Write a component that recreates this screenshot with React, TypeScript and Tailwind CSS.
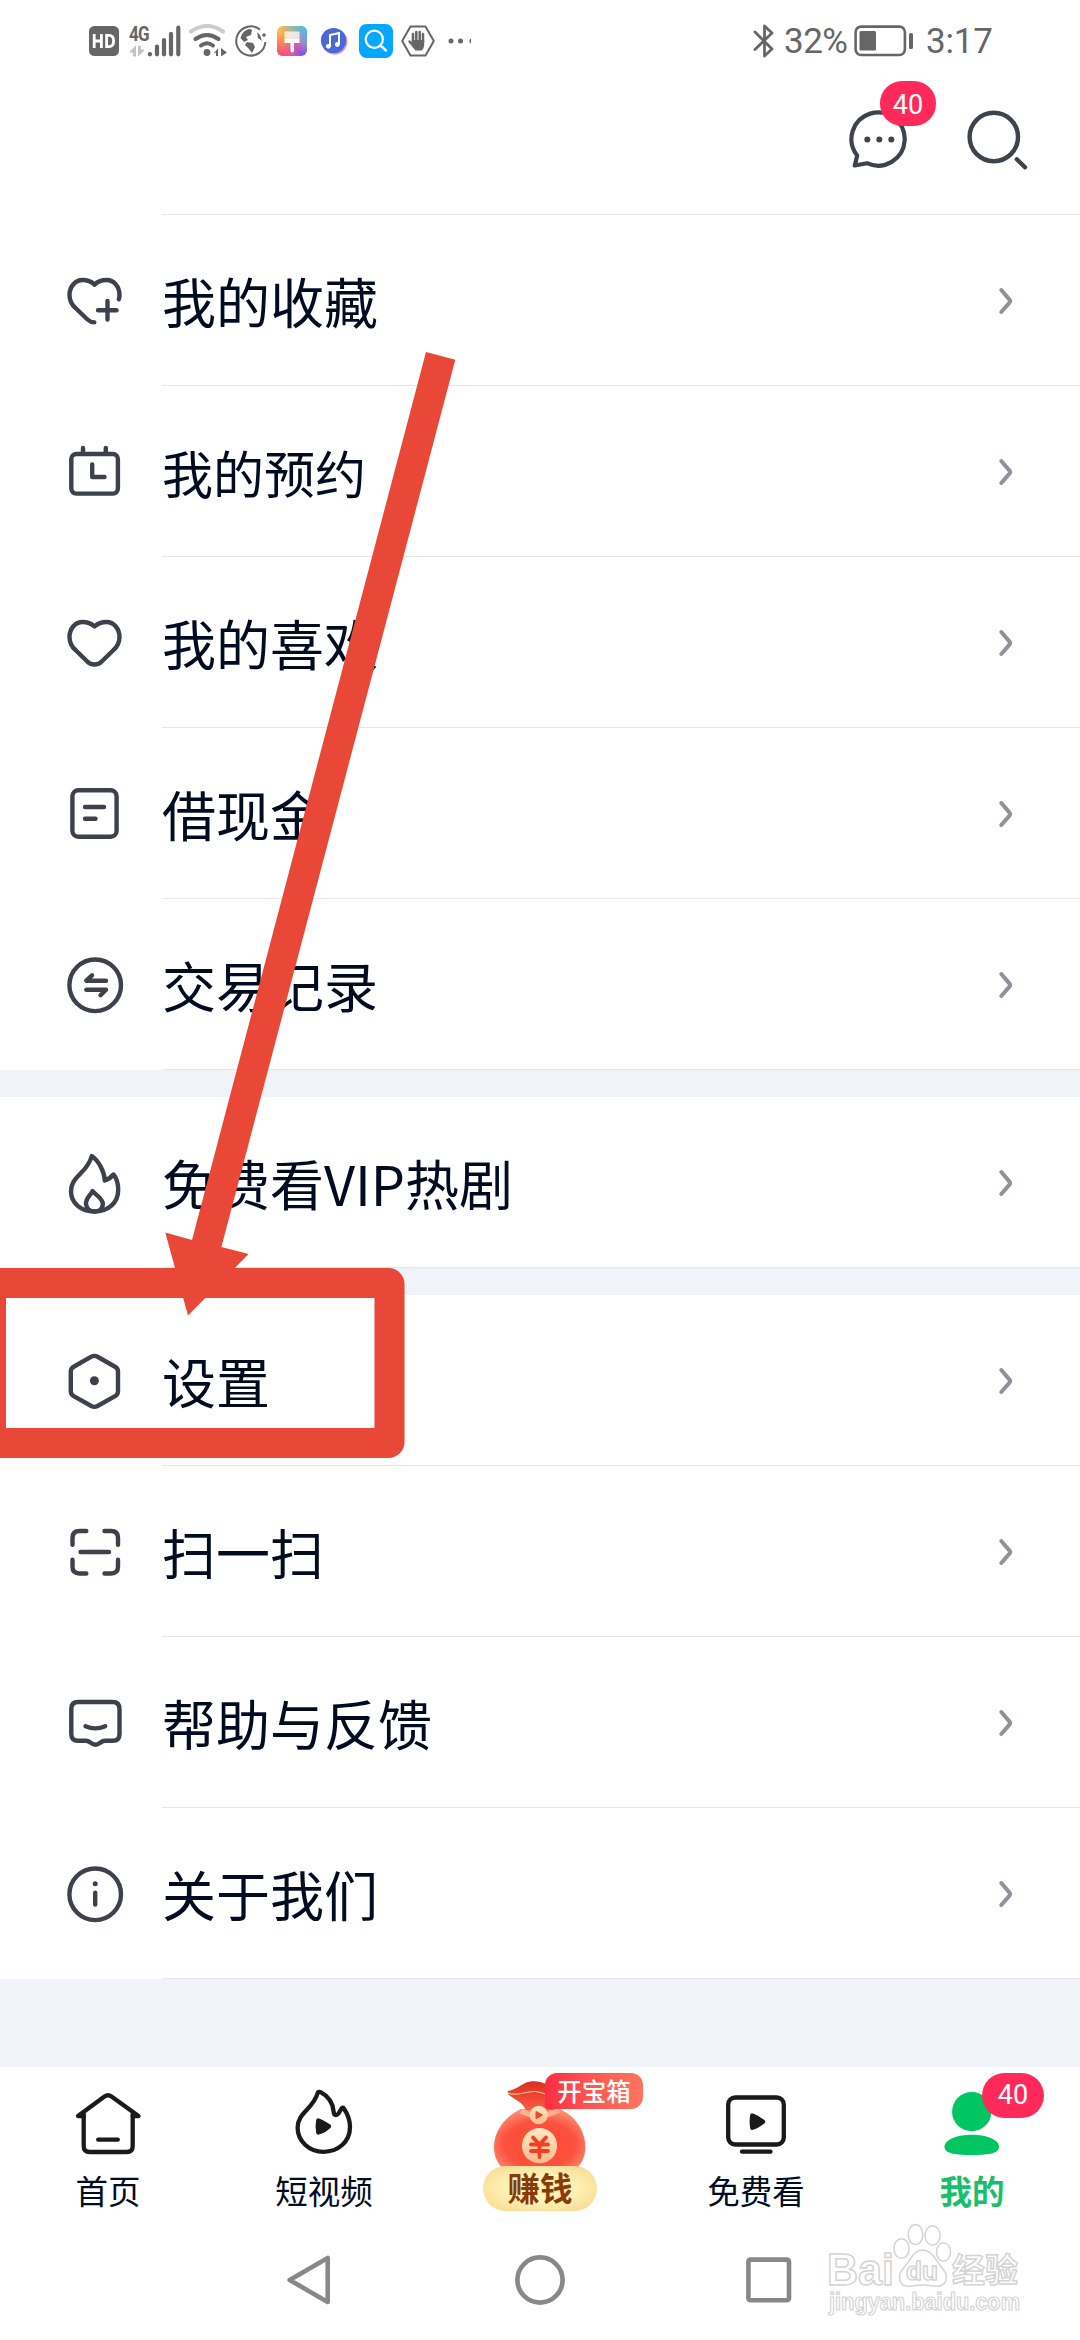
import type { PropsWithChildren, ReactNode } from "react";
import clsx from "clsx";

type MenuItem = {
  label: string;
  icon: ReactNode;
  small?: boolean;
};

// Line icons for the menu rows, all drawn in the same 60x60 box.
const MenuIcon = ({ children }: PropsWithChildren) => (
  <svg
    viewBox="0 0 60 60"
    className="h-[60px] w-[60px] shrink-0 overflow-visible"
    fill="none"
    stroke="#3d414c"
    strokeWidth="4.4"
    strokeLinecap="round"
    strokeLinejoin="round"
  >
    {children}
  </svg>
);

const menuGroups: MenuItem[][] = [
  [
    {
      label: "我的收藏",
      icon: (
        <MenuIcon>
          <path d="M29.5 14.5C25.5 10.8 21 10 17.5 10C10 10 4.5 17 4.5 25C4.5 30 6.5 34.5 10.5 38L22.5 49.5C25 51.8 27 52.3 29.3 52.4" />
          <path d="M29.5 14.5C33.5 10.8 38 10 41.5 10C49 10 54.5 16.5 54.5 25C54.5 26.7 54.3 27.8 53.8 29.2" />
          <path d="M33 40.3H51.5M42.5 31V49.5" />
        </MenuIcon>
      ),
    },
    {
      label: "我的预约",
      small: true,
      icon: (
        <MenuIcon>
          <rect x="6.3" y="13" width="46.6" height="39.6" rx="5" />
          <path d="M18 7V12M40.8 7V12M27.2 23.5V36H39.5" />
        </MenuIcon>
      ),
    },
    {
      label: "我的喜欢",
      icon: (
        <MenuIcon>
          <path d="M29.5 14.5C25.5 10.8 21 10 17.5 10C10 10 4.5 17 4.5 25C4.5 30 6.5 34.5 10.5 38L22 49.3C26 53.6 33 53.6 37 49.3L48.5 38C52.5 34.5 54.5 30 54.5 25C54.5 17 49 10 41.5 10C38 10 33.5 10.8 29.5 14.5Z" />
        </MenuIcon>
      ),
    },
    {
      label: "借现金",
      icon: (
        <MenuIcon>
          <rect x="7.4" y="7.2" width="44.2" height="46.6" rx="6" />
          <path d="M20 24H39M20 35.7H30.5" />
        </MenuIcon>
      ),
    },
    {
      label: "交易记录",
      icon: (
        <MenuIcon>
          <circle cx="30.2" cy="31.3" r="25.8" />
          <path d="M27 21.3L21.3 26.7H41M21.3 35.7H41L35.5 41.2" />
        </MenuIcon>
      ),
    },
  ],
  [
    {
      label: "免费看VIP热剧",
      icon: (
        <MenuIcon>
          <path d="M26.8 4C24.5 12 20 17 16 21C9 28 6 32 6 39.5C6 51 16 59.5 29.5 59.5C43 59.5 53.2 51 53.2 38C53.2 31.5 51.5 26 48.5 22.5C46 25.5 43 27.5 39.8 28.5C39.5 20 34 9 26.8 4Z" />
          <path d="M27.5 39C26 43 20.5 46 21 52C21.5 57 25 59.5 29.5 59.5C34.5 59.5 37.8 56.5 37.8 52C37.8 46 31 43.5 27.5 39Z" />
        </MenuIcon>
      ),
    },
  ],
  [
    {
      label: "设置",
      icon: (
        <MenuIcon>
          <path d="M26.3 6.7Q29.4 5 32.5 6.7L50.5 17Q53 18.5 53 21.5V41.3Q53 44.3 50.5 45.8L32.5 56Q29.4 57.7 26.3 56L8.3 45.8Q5.8 44.3 5.8 41.3V21.5Q5.8 18.5 8.3 17Z" />
          <circle cx="29.4" cy="30.8" r="4.5" fill="#3d414c" stroke="none" />
        </MenuIcon>
      ),
    },
    {
      label: "扫一扫",
      icon: (
        <MenuIcon>
          <path d="M7.5 23.7V17Q7.5 10 14.5 10H21.3M39.5 10H46Q53 10 53 17V23.7M53 38.7V45.5Q53 52.5 46 52.5H39.5M21.3 52.5H14.5Q7.5 52.5 7.5 45.5V38.7M15.5 31H44" />
        </MenuIcon>
      ),
    },
    {
      label: "帮助与反馈",
      icon: (
        <MenuIcon>
          <path d="M13 10H47.7Q54.5 10 54.5 17V42Q54.5 48.8 47.7 48.8H40C36 48.8 34 52.7 30.3 52.7C26.5 52.7 25 48.8 21 48.8H13Q6.3 48.8 6.3 42V17Q6.3 10 13 10Z" />
          <path d="M20.5 34.2Q30.3 38.6 40.2 34.2" />
        </MenuIcon>
      ),
    },
    {
      label: "关于我们",
      icon: (
        <MenuIcon>
          <circle cx="30.2" cy="31.3" r="25.8" />
          <path d="M30.2 29.7V41.5" />
          <circle cx="30.2" cy="20.7" r="2.5" fill="#3d414c" stroke="none" />
        </MenuIcon>
      ),
    },
  ],
];

const StatusBar = () => (
  <div className="flex h-[82px] items-center pl-[89px] pr-[90px] text-[#666]">
    <svg viewBox="0 0 30 30" className="h-[30px] w-[30px]">
      <rect width="30" height="30" rx="5.5" fill="#666" />
      <path d="M5.2 8V22M12.4 8V22M5.2 15H12.4M17.6 9.4V20.6H20C23 20.6 24.6 18.6 24.6 15C24.6 11.4 23 9.4 20 9.4Z" fill="none" stroke="#fff" strokeWidth="2.8" />
    </svg>
    {/* mobile signal */}
    <div className="ml-2.5 flex items-end">
      <div className="flex w-[19px] flex-col items-start">
        <span className="origin-left scale-x-85 font-['Roboto'] text-[20px] leading-[17px] font-bold tracking-[-1px]">4G</span>
        <svg viewBox="0 0 16 12" className="mt-0.5 h-3 w-4" fill="#c4c4c4">
          <path d="M4 0.500V11.500H7V0.500L1 6V7.500H4ZM9 0.500V11.500L15 6V4.500H12V0.500Z" />
        </svg>
      </div>
      <svg viewBox="0 0 33 32" className="h-8 w-[33px]" stroke="#666" strokeWidth="4.2" strokeLinecap="round">
        <path d="M2 29.2V29.3M9 21.5V29.3M16 15V29.3M23 8.8V29.3M30.3 2.7V29.3" />
      </svg>
    </div>
    {/* wifi */}
    <svg viewBox="0 0 38 34" className="ml-2 h-[34px] w-[38px]" fill="none" strokeWidth="4" strokeLinecap="round">
      <path d="M2 7.5Q18 -3.5 34 7.5" stroke="#ccc" />
      <path d="M6.5 15Q18 7 29.5 15M12 21.5Q18 17 24 21.5" stroke="#666" />
      <circle cx="18" cy="28.5" r="3.4" fill="#666" />
      <path d="M29 24.5V32H27V28.5L24.5 29.5ZM32 24L38 28.5L32 32.5Z" fill="#666" />
    </svg>
    {/* globe */}
    <svg viewBox="0 0 32 32" className="ml-2 h-8 w-8" fill="none" stroke="#666" strokeWidth="2">
      <path d="M25 4.6A14.6 14.6 0 1 0 30.4 17" />
      <circle cx="29" cy="10" r="1.8" fill="#666" stroke="none" />
      <path d="M15 4C10 4.5 7 8 5.5 13L9 17L13 15L11 12L16 10L17 5ZM12 17L18 18L20 22L17 28L14 24L10 20ZM22 7L25 10L27 16L23 13Z" fill="#666" stroke="none" />
    </svg>
    {/* themes app */}
    <svg viewBox="0 0 30 30" className="ml-[10px] h-[30px] w-[30px]">
      <defs>
        <linearGradient id="themeA" x1="0" y1="0" x2="1" y2="1">
          <stop offset="0" stopColor="#f8d34c" />
          <stop offset=".35" stopColor="#ff9a4d" />
          <stop offset=".6" stopColor="#e056b0" />
          <stop offset="1" stopColor="#5a4dff" />
        </linearGradient>
        <linearGradient id="themeB" x1="0" y1="1" x2="1" y2="0">
          <stop offset="0" stopColor="#ff3c66" />
          <stop offset=".45" stopColor="#ff7a70" stopOpacity="0" />
          <stop offset=".65" stopColor="#6ac8d8" stopOpacity=".5" />
          <stop offset="1" stopColor="#22c4ff" />
        </linearGradient>
      </defs>
      <rect width="30" height="30" rx="6" fill="url(#themeA)" />
      <rect width="30" height="30" rx="6" fill="url(#themeB)" />
      <path d="M7.5 5.5H22.5V13H7.5Z" fill="#fff" opacity=".75" />
      <path d="M7.5 13H22.5V17H17V25Q15 28 13.5 25V17H7.5Z" fill="#fff" />
    </svg>
    {/* music app */}
    <svg viewBox="0 0 28 28" className="ml-[13px] h-7 w-7">
      <circle cx="14.6" cy="14.6" r="12.8" fill="#d58cf0" />
      <circle cx="13.5" cy="13.5" r="12.6" fill="#4a68d8" />
      <path d="M10 19.5V8L19 6V17.5" fill="none" stroke="#fff" strokeWidth="2" />
      <circle cx="8.3" cy="19.3" r="2.4" fill="#fff" />
      <circle cx="17.3" cy="17.5" r="2.4" fill="#fff" />
    </svg>
    {/* browser search app */}
    <svg viewBox="0 0 34 34" className="ml-[11px] h-[34px] w-[34px]" fill="none">
      <rect width="34" height="34" rx="7.5" fill="#06a8ff" />
      <circle cx="15.3" cy="15.3" r="8.6" stroke="#fff" strokeWidth="2.2" />
      <path d="M21.5 21.5L27 26.5" stroke="#fff" strokeWidth="2.4" strokeLinecap="round" />
    </svg>
    {/* blocked notifications */}
    <svg viewBox="0 0 34 32" className="ml-2 h-8 w-[34px]" fill="none">
      <path d="M9.5 1.5H24.5L32.8 16L24.5 30.5H9.5L1.2 16Z" stroke="#666" strokeWidth="2" strokeLinejoin="round" />
      <path d="M12 9V17M15.3 7V16M18.7 7V16M22 9V17M8.5 16.5L12.5 21" stroke="#666" strokeWidth="2.5" strokeLinecap="round" />
      <path d="M10.8 15H23.2V20Q22.5 24.5 20.5 25.5H14.5Q12 23.5 10.8 20Z" fill="#666" />
    </svg>
    <svg viewBox="0 0 24 6" className="ml-[13px] h-1.5 w-6" fill="#666">
      <circle cx="3" cy="3" r="2.5" />
      <circle cx="12.5" cy="3" r="2.5" />
      <path d="M23 0.6A2.6 2.6 0 0 0 23 5.4Z" />
    </svg>

    <div className="ml-auto flex items-center font-['Roboto'] text-[35px] leading-none">
      <svg viewBox="0 0 22 34" className="h-[34px] w-[22px]" fill="none" stroke="#666" strokeWidth="2.8" strokeLinecap="round" strokeLinejoin="round">
        <path d="M2 8L19 25L11.5 32V2L19 9L2 25.5" />
      </svg>
      <span className="ml-[9px] w-[64px] tracking-[-0.5px]">32%</span>
      <svg viewBox="0 0 60 32" className="ml-1.5 h-8 w-[60px]" fill="none">
        <rect x="1.6" y="1.6" width="49.3" height="28.4" rx="5.5" stroke="#666" strokeWidth="2.6" />
        <rect x="5.5" y="6" width="16.5" height="19.5" rx="1.5" fill="#666" />
        <rect x="55" y="8" width="4" height="16" rx="1.6" fill="#666" />
      </svg>
      <span className="ml-[12px] w-[64px] tracking-[-0.2px]">3:17</span>
    </div>
  </div>
);

const Header = () => (
  <header className="flex h-[132px] items-start justify-end pr-[50px]">
    <div className="relative mt-[26px] h-[64px] w-[64px]">
      <svg viewBox="0 0 64 64" className="h-[64px] w-[64px]" fill="none" stroke="#3d434d" strokeWidth="4.2" strokeLinejoin="round">
        <path d="M11.2 47.5L8.8 57.5L21 55.2A26.6 26.6 0 1 0 11.2 47.5Z" />
        <g fill="#3d434d" stroke="none">
          <circle cx="21.3" cy="31.4" r="3" />
          <circle cx="33.3" cy="31.4" r="3" />
          <circle cx="45.3" cy="31.4" r="3" />
        </g>
      </svg>
      <span className="absolute -top-[27px] left-[34px] flex h-[45px] w-[56px] items-center justify-center rounded-[22px] bg-[#ff2a59] pt-[3px] font-['Roboto'] text-[27px] leading-none text-white">
        40
      </span>
    </div>
    <svg viewBox="0 0 66 66" className="ml-[54px] mt-[25px] h-[66px] w-[66px]" fill="none" stroke="#3d434d" strokeWidth="4.4" strokeLinecap="round">
      <circle cx="29.8" cy="30" r="24.2" />
      <path d="M52.8 52.3L61 60.3" />
    </svg>
  </header>
);

const MenuRow = ({ label, icon, small }: MenuItem) => (
  <div className="flex h-[171px] pl-[65px]">
    <div className="flex w-[97px] items-center pb-[2px]">{icon}</div>
    <div className="flex flex-1 items-center justify-between border-b border-[#e6e7ea] pr-[66px] pt-[2px]">
      <span
        className={clsx(
          "leading-none text-[#020c20]",
          small ? "text-[51px]" : "text-[54px]",
        )}
      >
        {label}
      </span>
      <svg viewBox="0 0 16 28" className="h-7 w-4" fill="none" stroke="#8e929b" strokeWidth="4" strokeLinecap="round" strokeLinejoin="round">
        <path d="M3.3 3L11.5 12.6Q12.8 14.1 11.5 15.6L3.3 25" />
      </svg>
    </div>
  </div>
);

const TabItem = ({ label, active, children }: PropsWithChildren<{ label: string; active?: boolean }>) => (
  <div className="relative flex w-[216px] flex-col items-center pt-[22px]">
    <svg
      viewBox="0 0 72 72"
      className="h-[72px] w-[72px]"
      fill="none"
      stroke="#1a1a1a"
      strokeWidth="4.3"
      strokeLinecap="round"
      strokeLinejoin="round"
    >
      {children}
    </svg>
    <span
      className={clsx(
        "mt-[13px] text-[32.5px] leading-none",
        active ? "font-bold text-[#19bf6b]" : "text-[#020c20]",
      )}
    >
      {label}
    </span>
    {active && (
      <span className="absolute left-[118px] top-1.5 flex h-[45px] w-[62px] items-center justify-center rounded-full bg-[#ff2a59] font-['Roboto'] text-[27px] leading-none text-white">
        40
      </span>
    )}
  </div>
);

// Red money bag that sits behind the centre tab's golden pill.
const EarnTab = () => (
  <div className="relative flex w-[216px] flex-col items-center pt-1.5">
    <svg viewBox="0 0 114 95" className="h-[95px] w-[114px]">
      <defs>
        <radialGradient id="bagBody" cx=".5" cy=".6" r=".6">
          <stop offset="0" stopColor="#ff4a2c" />
          <stop offset=".65" stopColor="#fb5140" />
          <stop offset="1" stopColor="#fc8d70" />
        </radialGradient>
        <linearGradient id="bagFlap" x1="0" y1="0" x2="0" y2="1">
          <stop offset="0" stopColor="#d8301f" />
          <stop offset="1" stopColor="#fb5a42" />
        </linearGradient>
        <linearGradient id="coin" x1="0" y1="0" x2="0" y2="1">
          <stop offset="0" stopColor="#ffe9c4" />
          <stop offset="1" stopColor="#fdb98c" />
        </linearGradient>
      </defs>
      <path d="M38 36C22 43 11 58 11 74C11 83 14 89 19 95H94C100 89 102.3 82 102.3 74C102.3 58 92 42 76 36Z" fill="url(#bagBody)" />
      <path d="M24.7 18C31 17 37 13 42 10C49 7 57 8 63 11H80V33L70 37H43C39 28 31 27 25 21Z" fill="url(#bagFlap)" />
      <path d="M25 20C34 24 42 18 52 18.5C58 19 63 21 68 23" fill="none" stroke="#ffc2a0" strokeWidth="1.2" />
      <path d="M38 38Q56 48 76 37" fill="none" stroke="#fdb08a" strokeWidth="5" />
      <circle cx="55.7" cy="42" r="9.2" fill="url(#coin)" />
      <path d="M53 38.5L59.5 42L53 45.7Z" fill="#f0452c" stroke="#f0452c" strokeLinejoin="round" />
      <circle cx="56.5" cy="72.7" r="17.6" fill="url(#coin)" />
      <path d="M50 64.5L56.5 71.5L63 64.5M48 71.5H65M48 78H65M56.5 71.5V84" fill="none" stroke="#f23f22" strokeWidth="3.8" strokeLinecap="round" />
    </svg>
    <span className="-mt-[2px] flex h-[45px] w-[114px] items-center justify-center rounded-full bg-radial from-[#fff3b8] from-40% to-[#f6d488] pb-[3px] text-[32.5px] leading-none font-bold text-[#8a3a05]">
      赚钱
    </span>
    <span className="absolute left-[113px] top-1.5 flex h-9 w-[98px] items-center justify-center rounded-[12px] rounded-bl-[3px] bg-linear-to-r from-[#fb2c44] to-[#fd7560] text-[24.5px] leading-none font-medium text-white">
      开宝箱
    </span>
  </div>
);

const TabBar = () => (
  <nav className="flex h-[153px] bg-white">
    <TabItem label="首页">
      <path d="M11.7 25V57Q11.7 63 17.7 63H54.7Q60.7 63 60.7 57V25M26.2 50.7H45.8" />
      <path d="M11.7 27H6L32.5 7.5Q36 5 39.5 7.5L66.5 27H60.7" />
    </TabItem>
    <TabItem label="短视频">
      <path d="M29.5 4.5C30 2.7 31.5 2.4 33 3.4C40 7 45 14 45.7 23C46 26.5 48.5 27 50.5 24.5L53.5 19.5C54.3 18.2 55.2 18.4 56 19.7C60 25.5 62 31 62 38C62 53 50 62.8 35.5 62.8C21 62.8 9.6 52 9.6 38.5C9.6 24 25 20 29.5 4.5Z" />
      <path d="M30.3 31.5Q34.5 33 41 37.3Q35 42.5 30.3 43.5Q29 37.5 30.3 31.5Z" fill="#1a1a1a" />
    </TabItem>
    <EarnTab />
    <TabItem label="免费看">
      <rect x="8.2" y="8.5" width="55.6" height="47" rx="7" />
      <path d="M22 62.7H50.5" />
      <path d="M32.3 26.5Q36.5 28 43 32.7Q36.5 37.5 32.3 38.8Q31.2 32.5 32.3 26.5Z" fill="#1a1a1a" />
    </TabItem>
    <TabItem label="我的" active>
      <circle cx="35.7" cy="22.7" r="19.6" fill="#00c563" stroke="none" />
      <path d="M8.5 58C8.5 50 22 45.7 35.7 45.7C49.5 45.7 63 50 63 58C63 65 50 66 35.7 66C21.5 66 8.5 65 8.5 58Z" fill="#00c563" stroke="none" />
    </TabItem>
  </nav>
);

const SystemNav = () => (
  <div className="flex h-[120px] items-center justify-between bg-white px-[284px]">
    <svg viewBox="0 0 50 54" className="h-[54px] w-[50px]" fill="none" stroke="#888" strokeWidth="4.6" strokeLinejoin="round">
      <path d="M5.7 27L43.7 5L43.7 49Z" />
    </svg>
    <svg viewBox="0 0 50 50" className="h-[50px] w-[50px]" fill="none" stroke="#888" strokeWidth="4.6">
      <circle cx="25" cy="25" r="22.6" />
    </svg>
    <svg viewBox="0 0 50 50" className="h-[50px] w-[50px]" fill="none" stroke="#888" strokeWidth="4.6">
      <rect x="2.4" y="4.6" width="40.6" height="40.6" rx="2" />
    </svg>
  </div>
);

// Hand-drawn highlight: arrow pointing at the boxed "设置" row.
const Annotation = () => (
  <svg viewBox="0 0 480 1120" className="pointer-events-none absolute left-0 top-[350px] h-[1120px] w-[480px]">
    <path d="M426 2L455.3 9.8L221.4 897L248.6 904L188 965.5L165.3 882.5L192 890Z" fill="#e94738" />
    <rect x="-9" y="933" width="398.5" height="160" rx="1" fill="none" stroke="#e94738" strokeWidth="30" strokeLinejoin="round" />
  </svg>
);

const Watermark = () => (
  <svg
    viewBox="0 0 210 110"
    className="pointer-events-none absolute left-[820px] top-[2215px] h-[110px] w-[210px] overflow-visible"
    fill="#fff"
    stroke="#d4d4d4"
    strokeWidth="1.5"
  >
    <text x="7" y="70" textLength="67" lengthAdjust="spacingAndGlyphs" className="font-['Liberation_Sans'] text-[44px] font-bold">Bai</text>
    <path d="M102 35C109 35 113 40 117 46C121 53 127 56 126.500 63C126 70 120 72 114 71C106 69.500 99 69.500 92 71C84 72.500 79 69 79.500 61C80 55 85 53 89 46C93 40 96 35 102 35Z" />
    <ellipse cx="81.500" cy="33.500" rx="7.600" ry="9.800" />
    <ellipse cx="95.500" cy="19.500" rx="7.300" ry="10" />
    <ellipse cx="112.500" cy="20.500" rx="7.500" ry="9.700" />
    <ellipse cx="123.500" cy="37" rx="7" ry="9.300" />
    <text x="86" y="65" textLength="32" lengthAdjust="spacingAndGlyphs" className="font-['Liberation_Sans'] text-[26px] font-bold">du</text>
    <text x="132" y="67" textLength="66" lengthAdjust="spacingAndGlyphs" className="text-[33px] font-bold">经验</text>
    <text x="9" y="95" textLength="191" lengthAdjust="spacingAndGlyphs" strokeWidth="1.200" className="font-['Liberation_Sans'] text-[23px] font-bold">jingyan.baidu.com</text>
  </svg>
);

const App = () => (
  <div className="relative flex h-[2340px] w-[1080px] flex-col overflow-hidden bg-white font-['Noto_Sans_CJK_SC',sans-serif]">
    <StatusBar />
    <Header />
    <div className="ml-[162px] h-px shrink-0 bg-[#e6e7ea]" />
    <main className="flex flex-1 flex-col gap-[27px] bg-[#f0f4f9]">
      {menuGroups.map((group) => (
        <section key={group[0].label} className="bg-white">
          {group.map((item) => (
            <MenuRow key={item.label} {...item} />
          ))}
        </section>
      ))}
    </main>
    <TabBar />
    <SystemNav />
    <Annotation />
    <Watermark />
  </div>
);

export default App;
